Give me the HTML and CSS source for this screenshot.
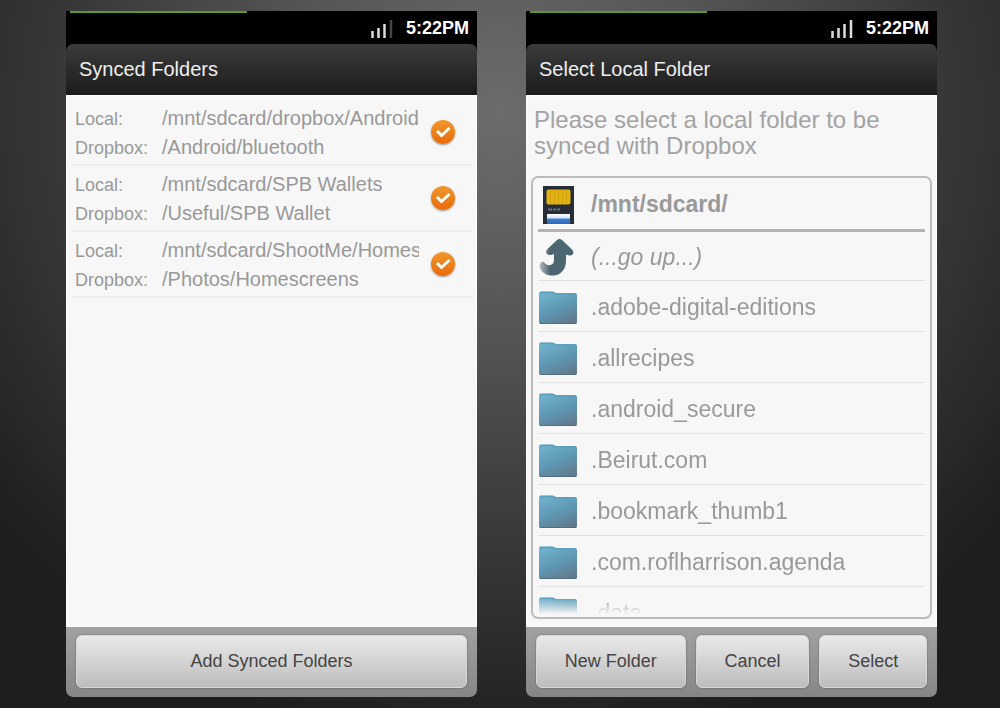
FILE: index.html
```html
<!DOCTYPE html>
<html lang="en">
<head>
    <meta charset="UTF-8">
    <meta name="viewport" content="width=device-width, initial-scale=1.0">
    <title>Synced Folders</title>
    <link rel="stylesheet" href="styles.css">
</head>
<body>
    <!-- Shared icons -->
    <svg class="sprite" aria-hidden="true">
        <defs>
            <linearGradient id="folderFill" x1="0.3" y1="0" x2="0.8" y2="1">
                <stop offset="0" stop-color="#6fb0ca"/>
                <stop offset="0.5" stop-color="#5e97b3"/>
                <stop offset="1" stop-color="#62788b"/>
            </linearGradient>
            <linearGradient id="arrowFill" x1="0" y1="0" x2="1" y2="0">
                <stop offset="0" stop-color="#b4bcbd"/>
                <stop offset="0.3" stop-color="#4d6570"/>
                <stop offset="1" stop-color="#4d6875"/>
            </linearGradient>
            <linearGradient id="labelFill" x1="0" y1="0" x2="0" y2="1">
                <stop offset="0" stop-color="#ffffff"/>
                <stop offset="0.4" stop-color="#d5e4f5"/>
                <stop offset="0.5" stop-color="#3f7fd0"/>
                <stop offset="1" stop-color="#2c66bd"/>
            </linearGradient>
            <symbol id="folder" viewBox="0 0 40 40">
                <path d="M1 6.500q0-2 2-2h11q2 0 3 1l1 .5h19q2 0 2 2V35.500q0 1.500-2 1.500H3q-2 0-2-1.500z" fill="url(#folderFill)"/>
                <path d="M2 5.500h12.500l3 1.500H38" fill="none" stroke="#5ba0bf" stroke-width="1.500"/>
                <path d="M2 36.500h36" stroke="#546c80" stroke-width="1"/>
            </symbol>
        </defs>
    </svg>

    <main class="screens">
        <section class="phone">
            <div class="status-bar">
                <svg class="signal" viewBox="0 0 22 20" aria-hidden="true">
                    <path d="M1.500 12v7M7.500 9v10M13.500 5v14" stroke="#ddd" stroke-width="2.500"/>
                    <path d="M20 1v18" stroke="#444" stroke-width="2.500"/>
                </svg>
                <span class="time">5:22PM</span>
            </div>
            <h1 class="title-bar">Synced Folders</h1>
            <div class="content">
                <ul class="synced-list">
                    <li class="synced-item">
                        <label class="paths" for="sync1">
                            <span class="key">Local:</span>
                            <span class="value">/mnt/sdcard/dropbox/Android</span>
                            <span class="key">Dropbox:</span>
                            <span class="value">/Android/bluetooth</span>
                        </label>
                        <span class="check">
                            <input type="checkbox" id="sync1" checked>
                            <svg viewBox="0 0 24 24" aria-hidden="true"><path d="M6 11l4.500 4.500L18.500 8"/></svg>
                        </span>
                    </li>
                    <li class="synced-item">
                        <label class="paths" for="sync2">
                            <span class="key">Local:</span>
                            <span class="value">/mnt/sdcard/SPB Wallets</span>
                            <span class="key">Dropbox:</span>
                            <span class="value">/Useful/SPB Wallet</span>
                        </label>
                        <span class="check">
                            <input type="checkbox" id="sync2" checked>
                            <svg viewBox="0 0 24 24" aria-hidden="true"><path d="M6 11l4.500 4.500L18.500 8"/></svg>
                        </span>
                    </li>
                    <li class="synced-item">
                        <label class="paths" for="sync3">
                            <span class="key">Local:</span>
                            <span class="value">/mnt/sdcard/ShootMe/Homes</span>
                            <span class="key">Dropbox:</span>
                            <span class="value">/Photos/Homescreens</span>
                        </label>
                        <span class="check">
                            <input type="checkbox" id="sync3" checked>
                            <svg viewBox="0 0 24 24" aria-hidden="true"><path d="M6 11l4.500 4.500L18.500 8"/></svg>
                        </span>
                    </li>
                </ul>
            </div>
            <div class="button-bar">
                <button type="button" class="btn">Add Synced Folders</button>
            </div>
        </section>

        <section class="phone">
            <div class="status-bar">
                <svg class="signal" viewBox="0 0 22 20" aria-hidden="true">
                    <path d="M1.500 12v7M7.500 9v10M13.500 5v14M20 1v18" stroke="#ddd" stroke-width="2.500"/>
                </svg>
                <span class="time">5:22PM</span>
            </div>
            <h1 class="title-bar">Select Local Folder</h1>
            <div class="content">
                <p class="hint">Please select a local folder to be synced with Dropbox</p>
                <div class="browser">
                    <div class="current">
                        <svg class="icon" viewBox="0 0 40 40" aria-hidden="true">
                            <path d="M5 1h31v38H5z" fill="#272d36"/>
                            <rect x="8.500" y="4.500" width="24" height="15" rx="2" fill="#e3b20f"/>
                            <path d="M12.500 6v12M16.500 6v12M20.500 6v12M24.500 6v12M28.500 6v12" stroke="#cfa010" stroke-width="1"/>
                            <path d="M10 24.500h4m1 0h3m1 0h3" stroke="#66707e" stroke-width="2"/>
                            <path d="M9 29h23v10H9z" fill="url(#labelFill)"/>
                        </svg>
                        <span class="name">/mnt/sdcard/</span>
                    </div>
                    <ul class="folder-list">
                        <li>
                            <button type="button" class="folder go-up">
                                <svg class="icon" viewBox="0 0 40 40" aria-hidden="true">
                                    <path d="M19 3q2.500-2 5 0l10.500 10q1.500 2 .5 4-1.500 2-4 1.500l-3-1V24c0 8-5 14-12 14.500C9 39 4 36 2 31c-1-4 1-7 4-6 3 5 10 4 10-2v-6l-3 1q-3 .5-4.500-1.500-1-2 .5-4z" fill="url(#arrowFill)"/>
                                </svg>
                                <span class="name">(...go up...)</span>
                            </button>
                        </li>
                        <li><button type="button" class="folder"><svg class="icon" aria-hidden="true"><use href="#folder"/></svg><span class="name">.adobe-digital-editions</span></button></li>
                        <li><button type="button" class="folder"><svg class="icon" aria-hidden="true"><use href="#folder"/></svg><span class="name">.allrecipes</span></button></li>
                        <li><button type="button" class="folder"><svg class="icon" aria-hidden="true"><use href="#folder"/></svg><span class="name">.android_secure</span></button></li>
                        <li><button type="button" class="folder"><svg class="icon" aria-hidden="true"><use href="#folder"/></svg><span class="name">.Beirut.com</span></button></li>
                        <li><button type="button" class="folder"><svg class="icon" aria-hidden="true"><use href="#folder"/></svg><span class="name">.bookmark_thumb1</span></button></li>
                        <li><button type="button" class="folder"><svg class="icon" aria-hidden="true"><use href="#folder"/></svg><span class="name">.com.roflharrison.agenda</span></button></li>
                        <li><button type="button" class="folder"><svg class="icon" aria-hidden="true"><use href="#folder"/></svg><span class="name">.data</span></button></li>
                    </ul>
                </div>
            </div>
            <div class="button-bar">
                <button type="button" class="btn">New Folder</button>
                <button type="button" class="btn">Cancel</button>
                <button type="button" class="btn">Select</button>
            </div>
        </section>
    </main>
</body>
</html>
```
FILE: styles.css
```css
* {
    box-sizing: border-box;
}
body {
    margin: 0;
    font-family: "Liberation Sans", Arial, sans-serif;
    color: #999;
    background: radial-gradient(ellipse 65% 90% at 50% 16%, #6c6c6c 0%, #545454 35%, #363636 70%, #1e1e1e 100%);
}
ul {
    list-style: none;
    margin: 0;
    padding: 0;
}
.sprite {
    position: absolute;
    width: 0;
    height: 0;
}
.screens {
    display: grid;
    grid-template-columns: 1fr 1fr;
    gap: 49px;
    height: 100vh;
    padding: 11px 63px 11px 66px;
}
.phone {
    display: flex;
    flex-direction: column;
    min-width: 0;
    min-height: 0;
    background: #000;
    border-radius: 0 0 7px 7px;
    overflow: hidden;
}

/* Status bar and title */
.status-bar {
    display: flex;
    align-items: center;
    justify-content: flex-end;
    gap: 13px;
    height: 33px;
    padding: 2px 8px 0 0;
    background: linear-gradient(#5e9a1c, #5e9a1c) 4px 0 / 177px 2px no-repeat #000;
}
.signal {
    width: 22px;
    height: 20px;
}
.time {
    font-size: 18px;
    font-weight: bold;
    color: #fff;
}
.title-bar {
    margin: 0;
    padding: 0 13px;
    font-size: 20px;
    font-weight: normal;
    line-height: 51px;
    color: #eee;
    background: linear-gradient(#3b3b3b, #1b1b1b);
    border-radius: 7px 7px 0 0;
}
.content {
    display: flex;
    flex-direction: column;
    flex: 1;
    min-height: 0;
    background: #f7f7f7;
    border: 1px solid #fff;
}

/* Synced folders */
.synced-list {
    padding: 4px;
}
.synced-item {
    display: flex;
    align-items: center;
    gap: 12px;
    height: 66px;
    padding: 0 17px 0 4px;
    border-bottom: 2px solid #eee;
}
.paths {
    display: grid;
    grid-template-columns: 87px 1fr;
    align-items: baseline;
    flex: 1;
    min-width: 0;
    padding-top: 2px;
    line-height: 28px;
}
.key {
    font-size: 18px;
}
.value {
    font-size: 20px;
    white-space: nowrap;
    overflow: hidden;
}
.check {
    display: grid;
    width: 24px;
    height: 24px;
}
.check input,
.check svg {
    grid-area: 1 / 1;
    width: 24px;
    height: 24px;
    margin: 0;
}
.check input {
    appearance: none;
    border-radius: 50%;
    background: #ccc;
    box-shadow: 0 1px 2px rgba(0, 0, 0, 0.4);
}
.check input:checked {
    background: linear-gradient(#f0982c, #ea6a08);
}
.check svg {
    z-index: 1;
    pointer-events: none;
    fill: none;
    stroke: #fff;
    stroke-width: 3;
}

/* Folder browser */
.hint {
    margin: 0;
    padding: 11px 7px 17px;
    font-size: 24px;
    line-height: 26px;
    color: #a3a3a3;
}
.browser {
    display: flex;
    flex-direction: column;
    flex: 1;
    min-height: 0;
    margin: 0 4px 7px;
    padding: 0 5px 3px;
    border: 2px solid #bcbcbc;
    border-radius: 7px;
}
.current,
.folder {
    display: flex;
    align-items: center;
    gap: 13px;
    width: 100%;
    font-size: 23px;
}
.current {
    height: 54px;
    padding-top: 2px;
    font-weight: bold;
    border-bottom: 3px solid #b4b4b4;
}
.folder-list {
    flex: 1;
    min-height: 0;
    overflow: hidden;
    mask-image: linear-gradient(to top, transparent, #000 16px);
}
.folder {
    height: 51px;
    padding: 2px 0 0;
    font-family: inherit;
    color: inherit;
    text-align: left;
    background: none;
    border: 0;
    border-bottom: 1px solid #e2e2e2;
}
.go-up {
    height: 49px;
    font-style: italic;
}
.icon {
    flex: none;
    width: 40px;
    height: 40px;
}

/* Bottom buttons */
.button-bar {
    display: flex;
    gap: 10px;
    padding: 8px 10px 9px;
    background: linear-gradient(#a2a2a2, #868686);
}
.btn {
    flex: 1 1 auto;
    height: 53px;
    padding: 0 20px;
    font-family: inherit;
    font-size: 18px;
    color: #444;
    background: linear-gradient(#e9e9e9, #bdbdbd);
    border: 1px solid #d8d8d8;
    border-radius: 6px;
    box-shadow: 0 0 2px rgba(0, 0, 0, 0.4);
}
```
